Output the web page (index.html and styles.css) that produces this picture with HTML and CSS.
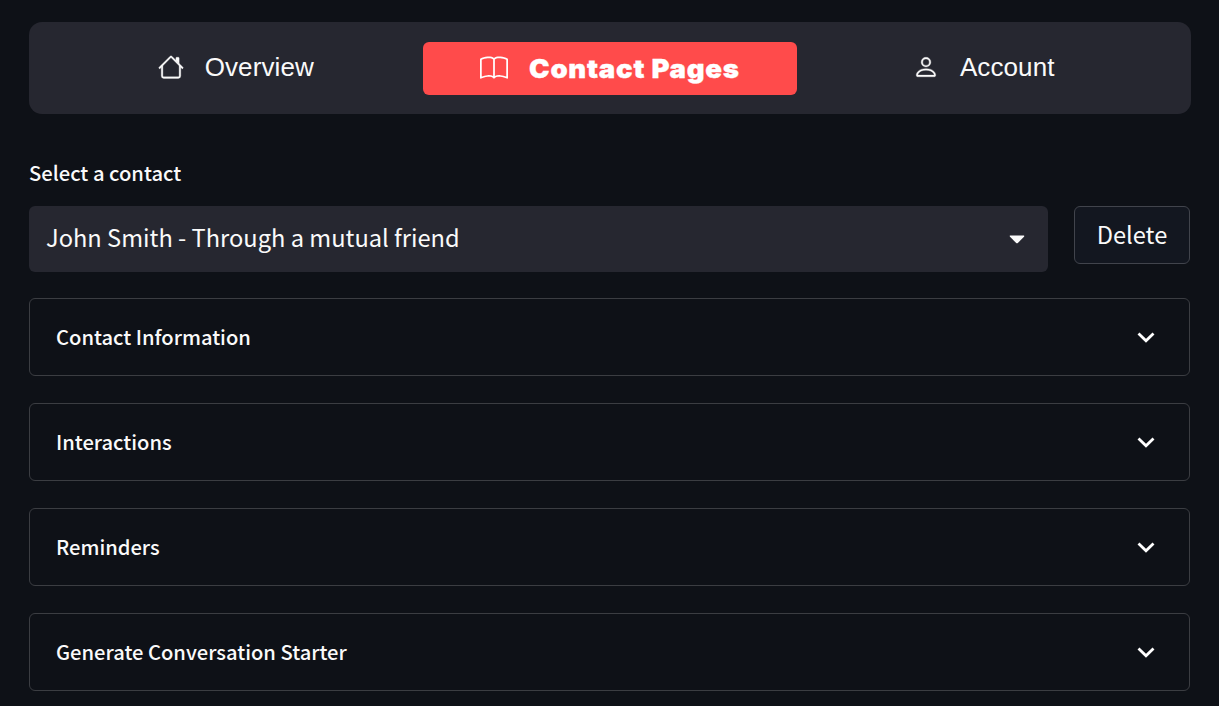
FILE: index.html
```html
<!DOCTYPE html>
<html lang="en">
<head>
<meta charset="utf-8">
<title>Contact Pages</title>
<link rel="stylesheet" href="styles.css">
</head>
<body>
<nav class="nav">
  <a class="nav-item"><svg class="nav-icon" width="26" height="26" viewBox="0 0 16 16" fill="currentColor"><path fill-rule="evenodd" d="M2 13.5V7h1v6.5a.5.500 0 0 0 .5.5h9a.5.500 0 0 0 .5-.5V7h1v6.500a1.500 1.500 0 0 1-1.500 1.500h-9A1.500 1.500 0 0 1 2 13.500zm11-11V6l-2-2V2.500a.5.500 0 0 1 .5-.5h1a.5.500 0 0 1 .5.500z"/><path fill-rule="evenodd" d="M7.293 1.500a1 1 0 0 1 1.414 0l6.647 6.646a.5.500 0 0 1-.708.708L8 2.207 1.354 8.854a.5.500 0 1 1-.708-.708L7.293 1.500z"/></svg><span class="nav-label">Overview</span></a>
  <a class="nav-item active"><svg class="nav-icon book" width="28" height="27" viewBox="0 0 16 16" preserveAspectRatio="none" fill="currentColor"><path d="M1 2.828c.885-.37 2.154-.769 3.388-.893 1.330-.134 2.458.063 3.112.752v9.746c-.935-.53-2.120-.603-3.213-.493-1.180.120-2.370.461-3.287.811V2.828zm7.500-.141c.654-.689 1.782-.886 3.112-.752 1.234.124 2.503.523 3.388.893v9.923c-.918-.350-2.107-.692-3.287-.810-1.094-.111-2.278-.039-3.213.492V2.687zM8 1.783C7.015.936 5.587.810 4.287.940c-1.514.153-3.042.672-3.994 1.105A.5.500 0 0 0 0 2.500v11a.5.500 0 0 0 .707.455c.882-.400 2.303-.881 3.680-1.020 1.409-.142 2.590.087 3.223.877a.5.500 0 0 0 .780 0c.633-.790 1.814-1.019 3.222-.877 1.378.139 2.800.620 3.681 1.020A.5.500 0 0 0 16 13.500v-11a.5.500 0 0 0-.293-.455c-.952-.433-2.480-.952-3.994-1.105C10.413.809 8.985.936 8 1.783z"/></svg><span class="nav-label">Contact Pages</span></a>
  <a class="nav-item"><svg class="nav-icon" width="26" height="26" viewBox="0 0 16 16" fill="currentColor"><path d="M8 8a3 3 0 1 0 0-6 3 3 0 0 0 0 6zm2-3a2 2 0 1 1-4 0 2 2 0 0 1 4 0zm4 8c0 1-1 1-1 1H3s-1 0-1-1 1-4 6-4 6 3 6 4zm-1-.004c-.001-.246-.154-.986-.832-1.664C11.516 10.680 10.289 10 8 10c-2.290 0-3.516.680-4.168 1.332-.678.678-.830 1.418-.832 1.664h10z"/></svg><span class="nav-label">Account</span></a>
</nav>
<main>
  <div class="label">Select a contact</div>
  <div class="row">
    <div class="select"><span class="value">John Smith - Through a mutual friend</span><svg width="16" height="9" viewBox="0 0 16 9"><path d="M1.200.5h13.600q1 .2.200 1.200L8.800 8q-.8.700-1.600 0L1 1.700Q.2.700 1.200.5z" fill="currentColor"/></svg></div>
    <button class="delete">Delete</button>
  </div>
  <section class="panel"><span class="panel-title">Contact Information</span><svg class="chev" width="18" height="12" viewBox="0 0 18 12"><path d="M1.500 2.500l7.500 7.300 7.500-7.300"/></svg></section>
  <section class="panel"><span class="panel-title">Interactions</span><svg class="chev" width="18" height="12" viewBox="0 0 18 12"><path d="M1.500 2.500l7.500 7.300 7.500-7.300"/></svg></section>
  <section class="panel"><span class="panel-title">Reminders</span><svg class="chev" width="18" height="12" viewBox="0 0 18 12"><path d="M1.500 2.500l7.500 7.300 7.500-7.300"/></svg></section>
  <section class="panel"><span class="panel-title">Generate Conversation Starter</span><svg class="chev" width="18" height="12" viewBox="0 0 18 12"><path d="M1.500 2.500l7.500 7.300 7.500-7.300"/></svg></section>
</main>
</body>
</html>
```
FILE: styles.css
```css
* { box-sizing: border-box; }
body {
  margin: 0;
  padding: 22px 29px 0;
  height: 706px;
  overflow: hidden;
  background: #0e1117;
  color: #fafafa;
  font-family: "Noto Sans CJK SC", "Noto Sans", sans-serif;
}
.nav {
  display: grid;
  grid-template-columns: repeat(3, 1fr);
  width: 1162px;
  height: 92px;
  padding: 20px;
  border-radius: 13px;
  background: #262730;
  font-family: "Liberation Sans", Arial, sans-serif;
  font-size: 26px;
}
.nav-item {
  display: flex;
  height: 53px;
  padding-bottom: 3px;
  align-items: center;
  justify-content: center;
  gap: 20.5px;
  border-radius: 6px;
  line-height: 30px;
  letter-spacing: 0.1px;
}
.nav-icon {
  stroke: currentColor;
  stroke-width: 0.2;
  overflow: visible;
}
.active {
  gap: 27px;
  padding: 0 6px 0 0;
  background: #ff4b4b;
  color: #fff;
  font-family: Inter, sans-serif;
  font-weight: 900;
  letter-spacing: 0.7px;
}
.book { stroke-width: 0; }
.active .nav-label {
  margin-right: -0.7px;
  transform: scaleX(1.06);
  -webkit-text-stroke: 0.3px currentColor;
}
.label {
  margin-top: 44px;
  height: 30px;
  line-height: 30px;
  font-size: 20.2px;
  font-weight: 500;
}
.row {
  display: flex;
  gap: 26px;
  width: 1161px;
  margin-top: 18px;
  font-size: 23.65px;
}
.select {
  flex: 1;
  display: flex;
  height: 66px;
  padding: 0 23px 0 17px;
  align-items: center;
  justify-content: space-between;
  border-radius: 6px;
  background: #262730;
  line-height: 36px;
}
.value { padding-bottom: 4px; }
.delete {
  width: 116px;
  height: 58px;
  padding: 0 0 2px;
  border: 1px solid #41444c;
  border-radius: 6px;
  background: #131720;
  color: inherit;
  font: inherit;
  line-height: 36px;
}
.panel {
  display: flex;
  width: 1161px;
  height: 78px;
  margin-bottom: 27px;
  padding: 0 34px 0 26px;
  align-items: center;
  justify-content: space-between;
  border: 1px solid #3b3d42;
  border-radius: 6px;
  font-size: 20.15px;
  font-weight: 500;
  line-height: 30px;
}
.row + .panel { margin-top: 26px; }
.chev {
  fill: none;
  stroke: #fff;
  stroke-width: 2.8;
}
```
